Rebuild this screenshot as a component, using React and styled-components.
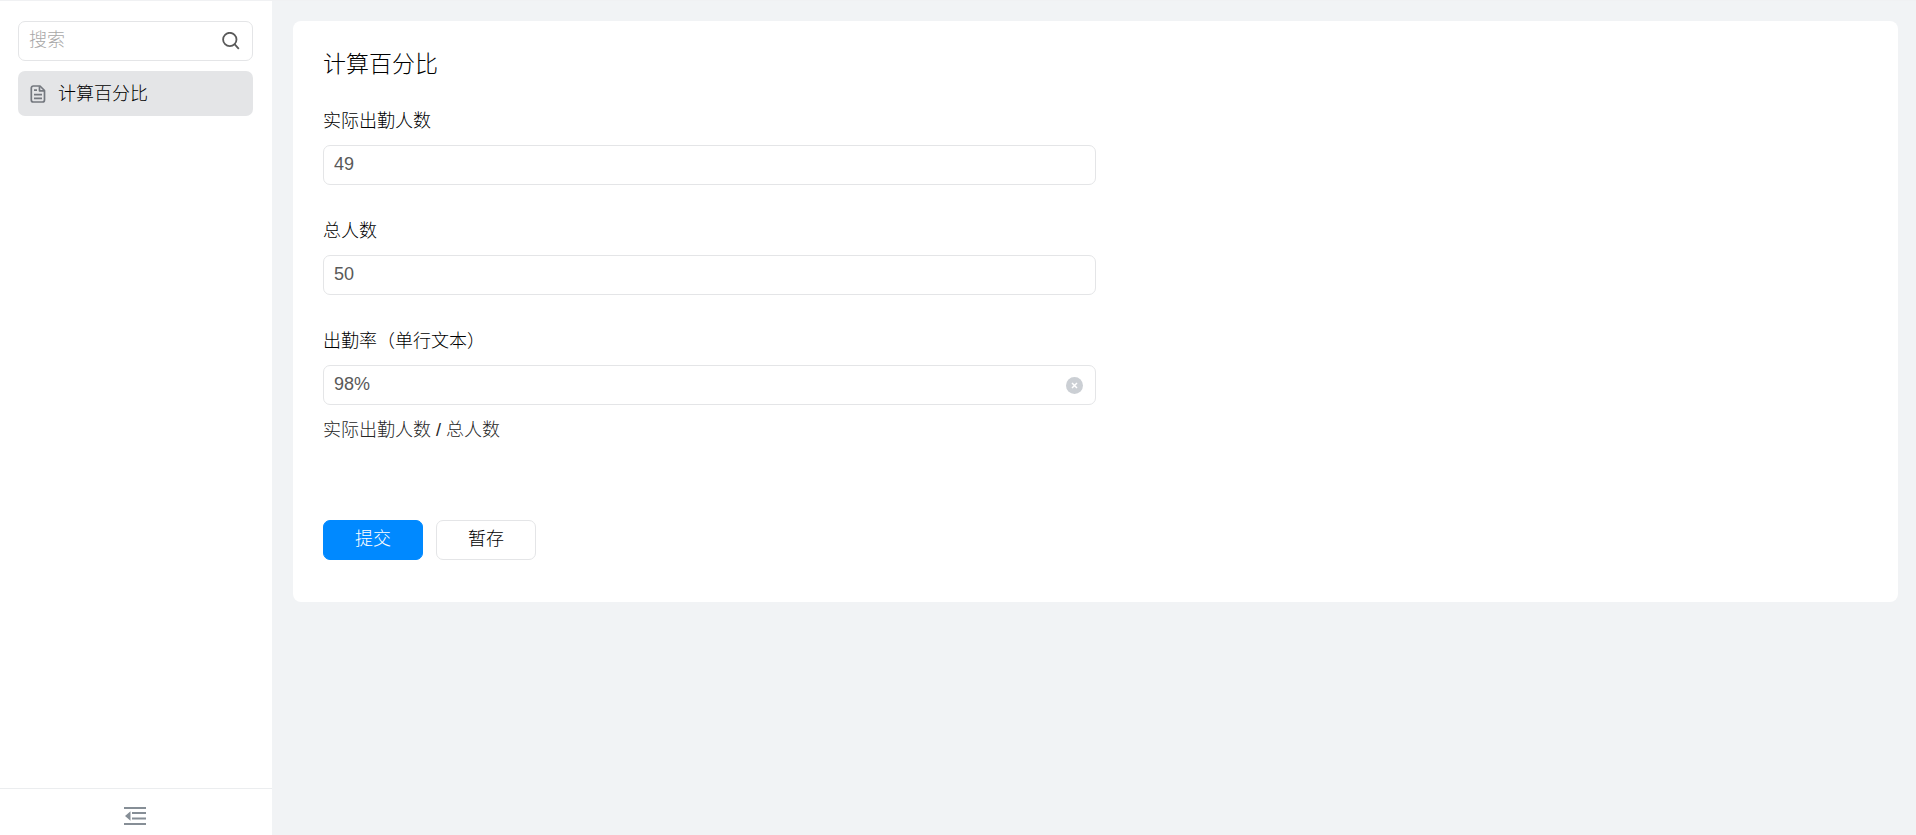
import React, { useState } from "react";
import styled, { createGlobalStyle } from "styled-components";


const fields = [
    { id: "actual", label: "实际出勤人数", value: "49" },
    { id: "total", label: "总人数", value: "50" },
    { id: "rate", label: "出勤率（单行文本）", value: "98%", clearable: true, hint: "实际出勤人数 / 总人数" },
]

export default function App() {
    return (
        <>
            <GlobalStyle />
            <Page>
                <Sidebar />
                <Main>
                    <Card>
                        <Title>计算百分比</Title>
                        <Form onSubmit={e => e.preventDefault()}>
                            {fields.map(field => (
                                <Field key={field.id} {...field} />
                            ))}
                            <Actions>
                                <Button type="submit" $primary>提交</Button>
                                <Button type="button">暂存</Button>
                            </Actions>
                        </Form>
                    </Card>
                </Main>
            </Page>
        </>
    )
}

function Sidebar() {
    return (
        <Side>
            <SideTop>
                <InputBox>
                    <Input type="text" placeholder="搜索" aria-label="搜索" />
                    <IconButton type="button" aria-label="搜索">
                        <SearchIcon />
                    </IconButton>
                </InputBox>
                <MenuItem href="#">
                    <FileIcon />
                    计算百分比
                </MenuItem>
            </SideTop>
            <SideBottom>
                <IconButton type="button" aria-label="收起">
                    <CollapseIcon />
                </IconButton>
            </SideBottom>
        </Side>
    )
}

function Field({ id, label, value, clearable, hint }) {
    const [text, setText] = useState(value)

    return (
        <FieldWrap>
            <Label htmlFor={id}>{label}</Label>
            <InputBox>
                <Input id={id} type="text" value={text} onChange={e => setText(e.target.value)} />
                {clearable &&
                    <IconButton type="button" aria-label="清除" onClick={() => setText("")}>
                        <ClearIcon />
                    </IconButton>
                }
            </InputBox>
            {hint && <Hint>{hint}</Hint>}
        </FieldWrap>
    )
}

function SearchIcon() {
    return (
        <svg width="18" height="18" viewBox="0 0 18 18" fill="none" stroke="#595959" strokeWidth="1.8">
            <circle cx="7.8" cy="7.5" r="6.7" />
            <path d="M12.5 12.2L16.8 16.8" />
        </svg>
    )
}

function FileIcon() {
    return (
        <svg width="16" height="18" viewBox="0 0 16 18" fill="none" stroke="#74787f" strokeWidth="1.7" strokeLinejoin="round">
            <path d="M3.3 1H10L14.5 5.5V15A2 2 0 0 1 12.5 17H3.3A2 2 0 0 1 1.3 15V3A2 2 0 0 1 3.3 1Z" />
            <path d="M9.5 1.2V5.8H14.2M4 5.2H7M4 9.6H12M4 13.3H12" />
        </svg>
    )
}

function CollapseIcon() {
    return (
        <svg width="22" height="18" viewBox="0 0 22 18" fill="#868e96">
            <path d="M0 0H22V2H0ZM8 5H22V7H8ZM8 10.5H22V12.5H8ZM0 16H22V18H0ZM1 9L6.5 4.3V13.7Z" />
        </svg>
    )
}

function ClearIcon() {
    return (
        <svg width="17" height="17" viewBox="0 0 17 17">
            <circle cx="8.5" cy="8.5" r="8.5" fill="#cbcfd4" />
            <path d="M6 6L11 11M11 6L6 11" stroke="#fff" strokeWidth="1.5" />
        </svg>
    )
}

const GlobalStyle = createGlobalStyle`
    * {
        box-sizing: border-box;
    }
    body {
        margin: 0;
        color: #000;
        font-size: 18px;
        font-weight: 300;
        line-height: 24px;
        font-family: "Liberation Sans", "Noto Sans CJK SC", sans-serif;
    }
    input, button {
        font: inherit;
        color: inherit;
    }
`

const Page = styled.div`
    display: flex;
    min-height: 100vh;
    background-color: #f1f3f5;
    border-top: 1px solid #f0f1f3;
`

const Side = styled.nav`
    width: 272px;
    flex-shrink: 0;
    display: flex;
    flex-direction: column;
    background-color: white;
`

const SideTop = styled.div`
    flex: 1;
    display: flex;
    flex-direction: column;
    gap: 10px;
    padding: 20px 19px 20px 18px;
`

const SideBottom = styled.div`
    height: 47px;
    display: flex;
    justify-content: center;
    align-items: center;
    padding: 8px 2px 0 0;
    border-top: 1px solid #ebedef;
`

const MenuItem = styled.a`
    height: 45px;
    display: flex;
    align-items: center;
    gap: 12px;
    padding: 0 12px;
    border-radius: 7px;
    background-color: #e4e5e7;
    color: inherit;
    text-decoration: none;
`

const Main = styled.main`
    flex: 1;
    padding: 20px 18px 20px 21px;
`

const Card = styled.section`
    padding: 28px 30px 42px;
    border-radius: 8px;
    background-color: white;
`

const Title = styled.h1`
    margin: 0 0 30px;
    font-size: 23px;
    font-weight: inherit;
    line-height: 30px;
`

const Form = styled.form`
    width: 50%;
    display: flex;
    flex-direction: column;
    gap: 34px;
`

const FieldWrap = styled.div`
    display: flex;
    flex-direction: column;
    gap: 12px;
`

const Label = styled.label`
`

const InputBox = styled.div`
    height: 40px;
    display: flex;
    align-items: center;
    padding: 0 12px 0 10px;
    border: 1px solid #e4e5e7;
    border-radius: 7px;
    background-color: white;
`

const Input = styled.input`
    flex: 1;
    min-width: 0;
    height: 100%;
    padding: 0 0 2px;
    border: none;
    outline: none;
    background: none;
    color: #595959;

    &::placeholder {
        color: #a8a8a8;
    }
`

const IconButton = styled.button`
    display: flex;
    padding: 0;
    border: none;
    background: none;
    cursor: pointer;
`

const Hint = styled.p`
    margin: 0;
    padding-top: 1px;
    color: #262626;
`

const Actions = styled.div`
    display: flex;
    gap: 13px;
    padding-top: 44px;
`

const Button = styled.button`
    width: 100px;
    height: 40px;
    padding: 0 0 2px;
    border: 1px solid ${props => props.$primary ? "#0089ff" : "#e4e5e7"};
    border-radius: 7px;
    background-color: ${props => props.$primary ? "#0089ff" : "white"};
    color: ${props => props.$primary ? "white" : "inherit"};
    cursor: pointer;
`
